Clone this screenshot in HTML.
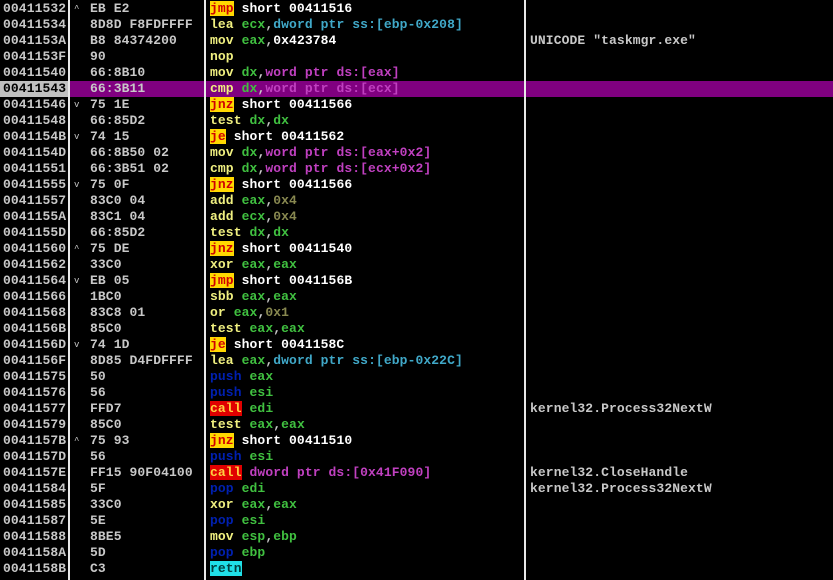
<!DOCTYPE html>
<html><head><meta charset="utf-8"><style>
body{margin:0;width:833px;height:580px;background:#000;overflow:hidden;position:relative;font-family:"Liberation Mono",monospace;font-weight:bold;font-size:13px;letter-spacing:0.1px;color:#c8c8c8}
.r{position:absolute;left:0;width:833px;height:16px;line-height:16px;white-space:pre}
.r span{position:absolute;top:0}
.a{left:3px}.ar{left:74px;font-size:9px;font-weight:normal}.h{left:90px}.m{left:210px}.c{left:530px}
.hl{background:#800080}
.hl .a{background:#c0c0c0;color:#000;left:0;width:66px;padding-left:3px}
.vl{position:absolute;top:0;width:2px;height:580px;background:#e8e8e8}
.y{color:#f0f080}.g{color:#40c040}.p{color:#c040c0}.cy{color:#40a8c8}.o{color:#888850}.w{color:#fff}
.j{background:#ffd800;color:#d00000}.cl{background:#e00000;color:#ffd040}.b{color:#0020b0}.rt{background:#20e0e8;color:#004040}
</style></head><body>
<div class="r" style="top:1px"><span class="a">00411532</span><span class="ar">^</span><span class="h">EB E2</span><span class="m"><i class="j" style="font-style:normal">jmp</i> <b class="w">short 00411516</b></span></div>
<div class="r" style="top:17px"><span class="a">00411534</span><span class="h">8D8D F8FDFFFF</span><span class="m"><b class="y">lea</b> <b class="g">ecx</b>,<b class="cy">dword ptr ss:[ebp-0x208]</b></span></div>
<div class="r" style="top:33px"><span class="a">0041153A</span><span class="h">B8 84374200</span><span class="m"><b class="y">mov</b> <b class="g">eax</b>,<b class="w">0x423784</b></span><span class="c">UNICODE "taskmgr.exe"</span></div>
<div class="r" style="top:49px"><span class="a">0041153F</span><span class="h">90</span><span class="m"><b class="y">nop</b></span></div>
<div class="r" style="top:65px"><span class="a">00411540</span><span class="h">66:8B10</span><span class="m"><b class="y">mov</b> <b class="g">dx</b>,<b class="p">word ptr ds:[eax]</b></span></div>
<div class="r hl" style="top:81px"><span class="a">00411543</span><span class="h">66:3B11</span><span class="m"><b class="y">cmp</b> <b class="g">dx</b>,<b class="p">word ptr ds:[ecx]</b></span></div>
<div class="r" style="top:97px"><span class="a">00411546</span><span class="ar">v</span><span class="h">75 1E</span><span class="m"><b class="j">jnz</b> <b class="w">short 00411566</b></span></div>
<div class="r" style="top:113px"><span class="a">00411548</span><span class="h">66:85D2</span><span class="m"><b class="y">test</b> <b class="g">dx</b>,<b class="g">dx</b></span></div>
<div class="r" style="top:129px"><span class="a">0041154B</span><span class="ar">v</span><span class="h">74 15</span><span class="m"><b class="j">je</b> <b class="w">short 00411562</b></span></div>
<div class="r" style="top:145px"><span class="a">0041154D</span><span class="h">66:8B50 02</span><span class="m"><b class="y">mov</b> <b class="g">dx</b>,<b class="p">word ptr ds:[eax+0x2]</b></span></div>
<div class="r" style="top:161px"><span class="a">00411551</span><span class="h">66:3B51 02</span><span class="m"><b class="y">cmp</b> <b class="g">dx</b>,<b class="p">word ptr ds:[ecx+0x2]</b></span></div>
<div class="r" style="top:177px"><span class="a">00411555</span><span class="ar">v</span><span class="h">75 0F</span><span class="m"><b class="j">jnz</b> <b class="w">short 00411566</b></span></div>
<div class="r" style="top:193px"><span class="a">00411557</span><span class="h">83C0 04</span><span class="m"><b class="y">add</b> <b class="g">eax</b>,<b class="o">0x4</b></span></div>
<div class="r" style="top:209px"><span class="a">0041155A</span><span class="h">83C1 04</span><span class="m"><b class="y">add</b> <b class="g">ecx</b>,<b class="o">0x4</b></span></div>
<div class="r" style="top:225px"><span class="a">0041155D</span><span class="h">66:85D2</span><span class="m"><b class="y">test</b> <b class="g">dx</b>,<b class="g">dx</b></span></div>
<div class="r" style="top:241px"><span class="a">00411560</span><span class="ar">^</span><span class="h">75 DE</span><span class="m"><b class="j">jnz</b> <b class="w">short 00411540</b></span></div>
<div class="r" style="top:257px"><span class="a">00411562</span><span class="h">33C0</span><span class="m"><b class="y">xor</b> <b class="g">eax</b>,<b class="g">eax</b></span></div>
<div class="r" style="top:273px"><span class="a">00411564</span><span class="ar">v</span><span class="h">EB 05</span><span class="m"><b class="j">jmp</b> <b class="w">short 0041156B</b></span></div>
<div class="r" style="top:289px"><span class="a">00411566</span><span class="h">1BC0</span><span class="m"><b class="y">sbb</b> <b class="g">eax</b>,<b class="g">eax</b></span></div>
<div class="r" style="top:305px"><span class="a">00411568</span><span class="h">83C8 01</span><span class="m"><b class="y">or</b> <b class="g">eax</b>,<b class="o">0x1</b></span></div>
<div class="r" style="top:321px"><span class="a">0041156B</span><span class="h">85C0</span><span class="m"><b class="y">test</b> <b class="g">eax</b>,<b class="g">eax</b></span></div>
<div class="r" style="top:337px"><span class="a">0041156D</span><span class="ar">v</span><span class="h">74 1D</span><span class="m"><b class="j">je</b> <b class="w">short 0041158C</b></span></div>
<div class="r" style="top:353px"><span class="a">0041156F</span><span class="h">8D85 D4FDFFFF</span><span class="m"><b class="y">lea</b> <b class="g">eax</b>,<b class="cy">dword ptr ss:[ebp-0x22C]</b></span></div>
<div class="r" style="top:369px"><span class="a">00411575</span><span class="h">50</span><span class="m"><b class="b">push</b> <b class="g">eax</b></span></div>
<div class="r" style="top:385px"><span class="a">00411576</span><span class="h">56</span><span class="m"><b class="b">push</b> <b class="g">esi</b></span></div>
<div class="r" style="top:401px"><span class="a">00411577</span><span class="h">FFD7</span><span class="m"><b class="cl">call</b> <b class="g">edi</b></span><span class="c">kernel32.Process32NextW</span></div>
<div class="r" style="top:417px"><span class="a">00411579</span><span class="h">85C0</span><span class="m"><b class="y">test</b> <b class="g">eax</b>,<b class="g">eax</b></span></div>
<div class="r" style="top:433px"><span class="a">0041157B</span><span class="ar">^</span><span class="h">75 93</span><span class="m"><b class="j">jnz</b> <b class="w">short 00411510</b></span></div>
<div class="r" style="top:449px"><span class="a">0041157D</span><span class="h">56</span><span class="m"><b class="b">push</b> <b class="g">esi</b></span></div>
<div class="r" style="top:465px"><span class="a">0041157E</span><span class="h">FF15 90F04100</span><span class="m"><b class="cl">call</b> <b class="p">dword ptr ds:[0x41F090]</b></span><span class="c">kernel32.CloseHandle</span></div>
<div class="r" style="top:481px"><span class="a">00411584</span><span class="h">5F</span><span class="m"><b class="b">pop</b> <b class="g">edi</b></span><span class="c">kernel32.Process32NextW</span></div>
<div class="r" style="top:497px"><span class="a">00411585</span><span class="h">33C0</span><span class="m"><b class="y">xor</b> <b class="g">eax</b>,<b class="g">eax</b></span></div>
<div class="r" style="top:513px"><span class="a">00411587</span><span class="h">5E</span><span class="m"><b class="b">pop</b> <b class="g">esi</b></span></div>
<div class="r" style="top:529px"><span class="a">00411588</span><span class="h">8BE5</span><span class="m"><b class="y">mov</b> <b class="g">esp</b>,<b class="g">ebp</b></span></div>
<div class="r" style="top:545px"><span class="a">0041158A</span><span class="h">5D</span><span class="m"><b class="b">pop</b> <b class="g">ebp</b></span></div>
<div class="r" style="top:561px"><span class="a">0041158B</span><span class="h">C3</span><span class="m"><b class="rt">retn</b></span></div>
<div class="vl" style="left:68px"></div>
<div class="vl" style="left:204px"></div>
<div class="vl" style="left:524px"></div>
</body></html>
